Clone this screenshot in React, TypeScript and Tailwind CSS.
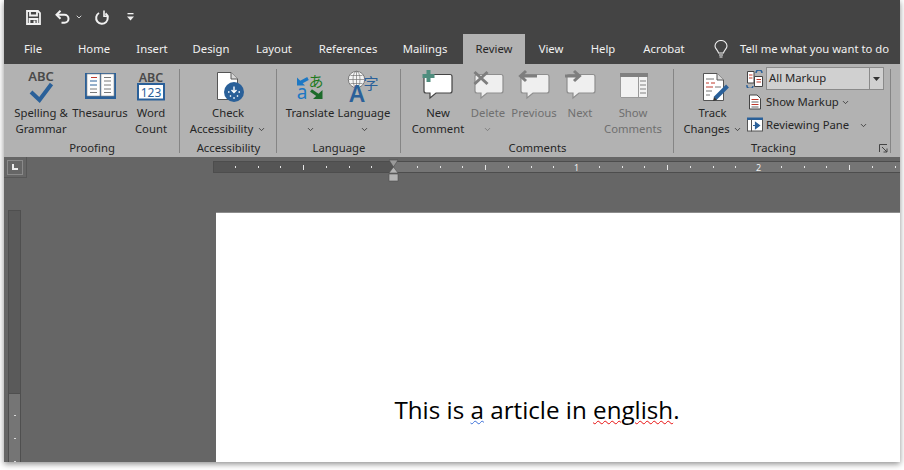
import React from 'react';
import { ChevronDown } from 'lucide-react';

const BLUE = '#2a6099';

const tabs = [
  { name: 'File', cls: 'w-[58px]' },
  { name: 'Home', cls: 'w-[64px]' },
  { name: 'Insert', cls: 'w-[52px]' },
  { name: 'Design', cls: 'w-[66px]' },
  { name: 'Layout', cls: 'w-[60px]' },
  { name: 'References', cls: 'w-[88px]' },
  { name: 'Mailings', cls: 'w-[66px]' },
  { name: 'Review', cls: 'w-[62px] ml-[5px] bg-[#b2b2b2] text-[#262626]' },
  { name: 'View', cls: 'w-[52px]' },
  { name: 'Help', cls: 'w-[52px]' },
  { name: 'Acrobat', cls: 'w-[70px]' },
];

// every icon uses page coordinates in its viewBox, which keeps the numbers easy to check
const Icon: React.FC<{ cx: number; children: React.ReactNode }> = ({ cx, children }) => (
  <svg width="60" height="38" viewBox={`${cx - 30} 68 60 38`} className="shrink-0 overflow-visible">
    {children}
  </svg>
);

const Chev: React.FC<{ className?: string }> = ({ className = '' }) => (
  <ChevronDown size={9} strokeWidth={2} className={`inline-block ${className}`} />
);

const Bubble: React.FC<{ x: number; stroke: string; fill: string }> = ({ x, stroke, fill }) => (
  <path
    d={`M${x + 2} 74.5 H${x + 26} a2 2 0 0 1 2 2 V91 a2 2 0 0 1 -2 2 H${x + 12} L${x + 6} 98 V93 H${x + 2} a2 2 0 0 1 -2 -2 V76.5 a2 2 0 0 1 2 -2 Z`}
    fill={fill}
    stroke={stroke}
    strokeWidth="1.2"
  />
);

const Large: React.FC<{
  w: string;
  icon: React.ReactNode;
  muted?: boolean;
  children: React.ReactNode;
}> = ({ w, icon, muted, children }) => (
  <div className={`${w} shrink-0 flex flex-col items-center ${muted ? 'text-[#6f6f6f]' : 'text-[#262626]'}`}>
    <div className="h-[37px] flex justify-center">{icon}</div>
    <div className="text-center leading-4 whitespace-nowrap">{children}</div>
  </div>
);

const Group: React.FC<{ w: string; label: string; labelCls?: string; bodyCls?: string; children: React.ReactNode }> = ({
  w,
  label,
  labelCls = '',
  bodyCls = '',
  children,
}) => (
  <div className={`${w} shrink-0 relative h-full flex flex-col`}>
    <div className={`flex flex-1 pt-[4px] ${bodyCls}`}>{children}</div>
    <div className={`h-[19px] text-center leading-[19px] text-[#262626] ${labelCls}`}>{label}</div>
    <div className="absolute right-0 top-[5px] bottom-[4px] w-px bg-[#858585]" />
  </div>
);

const rulerCells = Array.from({ length: 31 }, (_, i) => i - 7);

export default function App() {
  return (
    <div className="w-[904px] h-[470px] bg-white overflow-hidden pl-[4px] [font-family:'Noto_Sans',sans-serif] text-[11.3px]">
      <div className="w-[896px] h-[462px] flex flex-col shadow-[0_2px_6px_rgba(0,0,0,0.45)]">
        {/* quick access */}
        <div className="h-[34px] bg-[#444444] flex items-center pl-[22px] text-[#f1f1f1]">
          <svg width="15" height="15" viewBox="0 0 15 15" fill="none" stroke="#f1f1f1" strokeWidth="1.8">
            <path d="M1 1 H12 L14 3 V14 H1 Z" />
            <path d="M4 1 V5.5 H11 V1" />
            <path d="M3.5 14 V9 H11.5 V14" />
            <rect x="7.5" y="10.5" width="2" height="3" fill="#f1f1f1" stroke="none" />
          </svg>
          <svg width="15" height="14" viewBox="0 0 15 14" fill="none" stroke="#f1f1f1" strokeWidth="2" className="ml-[14px]">
            <path d="M5.5 0.8 L1.5 4.8 L5.5 8.8" />
            <path d="M2 4.8 H9.5 a4 4 0 0 1 0 8 H6.5" />
          </svg>
          <ChevronDown size={8} strokeWidth={2.5} className="ml-[5px]" />
          <svg width="15" height="15" viewBox="0 0 15 15" fill="none" stroke="#f1f1f1" strokeWidth="2" className="ml-[11px]">
            <path d="M5 3 A5.8 5.8 0 1 0 11.5 3.4" />
            <path d="M10 0.5 V6.2 H14.5" strokeWidth="1.6" />
          </svg>
          <svg width="7" height="8" viewBox="0 0 7 8" fill="#f1f1f1" className="ml-[18px]">
            <rect x="0.5" y="0" width="6" height="1.3" />
            <path d="M0 3.5 H7 L3.5 7.5 Z" />
          </svg>
        </div>

        {/* tabs */}
        <div className="h-[30px] bg-[#444444] flex text-[#f1f1f1]">
          {tabs.map((t) => (
            <div key={t.name} className={`${t.cls} h-full flex items-center justify-center pt-[1px]`}>
              {t.name}
            </div>
          ))}
          <svg width="16" height="18" viewBox="0 0 16 18" fill="none" stroke="#f1f1f1" strokeWidth="1.1" className="ml-[14px] self-center">
            <path d="M5.5 13 C5 10 2 9 2 6 a6 5.5 0 0 1 12 0 C14 9 11 10 10.5 13 Z" />
            <path d="M6 15 H10 M6.5 17 H9.5" />
          </svg>
          <div className="ml-[11px] flex items-center pt-[1px] whitespace-nowrap">Tell me what you want to do</div>
        </div>

        {/* ribbon */}
        <div className="h-[93px] bg-[#b2b2b2] flex">
          <Group w="w-[176px]" label="Proofing" bodyCls="pl-[6px]">
            <Large
              w="w-[62px]"
              icon={
                <Icon cx={41}>
                  <text x="41" y="81" textAnchor="middle" fontSize="13" fontWeight="600" fill="#4a4a4a">ABC</text>
                  <path d="M31 92 L39.5 100 L51.5 84" fill="none" stroke={BLUE} strokeWidth="4" />
                </Icon>
              }
            >
              Spelling &amp;<br />Grammar
            </Large>
            <Large
              w="w-[56px]"
              icon={
                <Icon cx={100}>
                  <rect x="85" y="73" width="31" height="26" fill={BLUE} />
                  <path d="M87 74 H100 V96 H87 Z M101 74 H114 V96 H101 Z" fill="#fdfdfd" stroke="#8f8f8f" strokeWidth="0.6" />
                  <path d="M91 77.5 H97" stroke="#c0392b" strokeWidth="1" />
                  <path d="M90 81 H97 M90 85 H97" stroke={BLUE} strokeWidth="1" />
                  <path d="M90 89 H97 M90 92.5 H97 M104 77.5 H111 M104 81 H111 M104 85 H111 M104 89 H111 M104 92.5 H111" stroke="#7a7a7a" strokeWidth="1" />
                </Icon>
              }
            >
              Thesaurus
            </Large>
            <Large
              w="w-[46px]"
              icon={
                <Icon cx={151}>
                  <text x="151" y="81.5" textAnchor="middle" fontSize="12.5" fontWeight="600" fill="#4a4a4a">ABC</text>
                  <rect x="138" y="84" width="26" height="15.5" fill="#fff" stroke={BLUE} strokeWidth="2" />
                  <text x="151" y="96.5" textAnchor="middle" fontSize="12" fill={BLUE}>123</text>
                </Icon>
              }
            >
              Word<br />Count
            </Large>
          </Group>

          <Group w="w-[97px]" label="Accessibility">
            <Large
              w="w-[96px]"
              icon={
                <Icon cx={228}>
                  <path d="M217.5 72.5 H231 L237.5 79 V99.5 H217.5 Z" fill="#fff" stroke="#555" strokeWidth="1" />
                  <path d="M231 72.5 V79 H237.5" fill="#d8d8d8" stroke="#555" strokeWidth="1" />
                  <circle cx="234" cy="92" r="10" fill={BLUE} />
                  <path d="M234 86.5 V92.5 M231.5 90 L234 92.5 L236.5 90" fill="none" stroke="#fff" strokeWidth="1.4" />
                  <path d="M228 92 h1.5 M238.5 92 h1.5 M230 96.5 l1 -1 M237 95.5 l1 1 M233.3 98 h1.5" stroke="#fff" strokeWidth="1.5" />
                </Icon>
              }
            >
              Check<br />Accessibility <Chev className="ml-[1px]" />
            </Large>
          </Group>

          <Group w="w-[124px]" label="Language" bodyCls="pl-[5px]">
            <Large
              w="w-[56px]"
              icon={
                <Icon cx={310}>
                  <path d="M297 77.5 L297 85.5 L305 85.5 Z" fill="#1d78c4" />
                  <path d="M300.5 82.5 L308 78.5" stroke="#1d78c4" strokeWidth="3.2" />
                  <text x="302" y="99" textAnchor="middle" fontSize="19" fill="#1d78c4">a</text>
                  <text x="316" y="86.5" textAnchor="middle" fontSize="15" fill="#1e7a1e" fontFamily="'Noto Sans CJK JP',sans-serif">あ</text>
                  <path d="M322.5 90 L322.5 99 L313 99 Z" fill="#1c6b2a" />
                  <path d="M311 90.5 L319 96" stroke="#1c6b2a" strokeWidth="3.2" />
                </Icon>
              }
            >
              Translate
              <div className="h-[16px] flex justify-center items-center"><Chev /></div>
            </Large>
            <Large
              w="w-[52px]"
              icon={
                <Icon cx={364}>
                  <circle cx="356.5" cy="79.5" r="8.2" fill="#f5f5f5" stroke="#666" strokeWidth="0.8" />
                  <path d="M348.5 79.5 H364.5 M356.5 71.5 V87.5 M350.5 75.5 H362.5 M350.5 83.5 H362.5" stroke="#777" strokeWidth="0.7" />
                  <ellipse cx="356.5" cy="79.5" rx="3.5" ry="8.2" fill="none" stroke="#777" strokeWidth="0.7" />
                  <text x="357" y="102" textAnchor="middle" fontSize="23" fontWeight="600" fill={BLUE}>A</text>
                  <text x="371" y="89" textAnchor="middle" fontSize="15" fill={BLUE} fontFamily="'Noto Sans CJK SC',sans-serif">字</text>
                </Icon>
              }
            >
              Language
              <div className="h-[16px] flex justify-center items-center"><Chev /></div>
            </Large>
          </Group>

          <Group w="w-[273px]" label="Comments" bodyCls="pl-[10px]">
            <Large
              w="w-[54px]"
              icon={
                <Icon cx={438}>
                  <Bubble x={424} stroke="#444" fill="#fff" />
                  <path d="M426.5 70 H430.5 V74 H434.5 V78 H430.5 V82 H426.5 V78 H422.5 V74 H426.5 Z" fill="#4f8d7e" />
                </Icon>
              }
            >
              New<br />Comment
            </Large>
            <Large
              w="w-[46px]"
              muted
              icon={
                <Icon cx={488}>
                  <Bubble x={475} stroke="#8e8e8e" fill="#efefef" />
                  <path d="M474.5 72 L487.5 84 M487.5 72 L474.5 84" stroke="#7e7e7e" strokeWidth="3" />
                </Icon>
              }
            >
              Delete
              <div className="h-[16px] flex justify-center items-center"><Chev /></div>
            </Large>
            <Large
              w="w-[46px]"
              muted
              icon={
                <Icon cx={534}>
                  <Bubble x={521} stroke="#8e8e8e" fill="#efefef" />
                  <path d="M526 71 L520.5 76 L526 81 M521 76 H537" fill="none" stroke="#7e7e7e" strokeWidth="3" />
                </Icon>
              }
            >
              Previous
            </Large>
            <Large
              w="w-[46px]"
              muted
              icon={
                <Icon cx={580}>
                  <Bubble x={567} stroke="#8e8e8e" fill="#efefef" />
                  <path d="M574 71 L579.5 76 L574 81 M565 76 H579" fill="none" stroke="#7e7e7e" strokeWidth="3" />
                </Icon>
              }
            >
              Next
            </Large>
            <Large
              w="w-[60px]"
              muted
              icon={
                <Icon cx={633}>
                  <rect x="620" y="73" width="28" height="25" fill="#f2f2f2" />
                  <rect x="620" y="73" width="28" height="4" fill="#808080" />
                  <path d="M620.5 77 V97.5 H647.5 V77 M638.5 77 V97.5" fill="none" stroke="#9a9a9a" strokeWidth="1" />
                  <path d="M640 81 H646 M640 85 H646 M640 89 H646 M640 93 H646" stroke="#808080" strokeWidth="1" />
                </Icon>
              }
            >
              Show<br />Comments
            </Large>
          </Group>

          <Group w="w-[217px]" label="Tracking" labelCls="pr-[18px]" bodyCls="pl-[6px] pt-[3px]">
            <Large
              w="w-[65px]"
              icon={
                <Icon cx={712}>
                  <path d="M702.5 73.5 H716 L722.5 80 V100.5 H702.5 Z" fill="#fff" stroke="#555" strokeWidth="1" />
                  <path d="M716 73.5 V80 H722.5" fill="#ddd" stroke="#555" strokeWidth="1" />
                  <path d="M705 83 H708 M710 83 H714 M705 87 H712" stroke="#c0392b" strokeWidth="1" />
                  <path d="M705 79 H713 M714 87 H720 M705 91 H711 M705 95 H709" stroke="#777" strokeWidth="1" />
                  <path d="M726.5 86 L714 98.5" stroke={BLUE} strokeWidth="4" />
                  <path d="M712 101 L713 97 L716 100 Z" fill="#333" />
                </Icon>
              }
            >
              Track<br />Changes <Chev />
            </Large>
            <div className="flex flex-col text-[#262626] -mt-[1px] ml-[1px]">
              <div className="h-[23px] flex items-center">
                <svg width="18" height="18" viewBox="746 69 18 18" className="shrink-0">
                  <path d="M747.5 70.5 H754 V82 H747.5 Z" fill="#fff" stroke="#444" strokeWidth="1" />
                  <path d="M754.5 75.5 H762.5 V85.5 H754.5 Z" fill="#fff" stroke="#444" strokeWidth="1" />
                  <path d="M749 74 H752.5 M749 77 H752.5 M756.5 78.5 H761 M756.5 81 H761" stroke="#c0392b" strokeWidth="1" />
                  <path d="M756 72 A3 3 0 0 1 762 72 M747 84 A3 3 0 0 0 753 85" fill="none" stroke={BLUE} strokeWidth="1.4" />
                </svg>
                <div className="w-[118px] h-[23px] ml-[2px] bg-[#d0d0d0] border border-[#8a8a8a] flex items-center">
                  <div className="flex-1 pl-[2px]">All Markup</div>
                  <div className="w-[14px] h-full border-l border-[#8a8a8a] flex items-center justify-center">
                    <svg width="7" height="4" viewBox="0 0 7 4" fill="#333"><path d="M0 0 H7 L3.5 4 Z" /></svg>
                  </div>
                </div>
              </div>
              <div className="h-[24px] flex items-center">
                <svg width="18" height="16" viewBox="746 92.5 18 16" className="shrink-0">
                  <path d="M749.5 93.5 H757 L760.5 97 V107.5 H749.5 Z" fill="#fff" stroke="#444" strokeWidth="1" />
                  <path d="M751.5 98 H758.5 M751.5 103 H758.5" stroke="#c0392b" strokeWidth="1" />
                  <path d="M751.5 100.5 H758.5 M751.5 105.5 H758.5" stroke="#666" strokeWidth="1" />
                </svg>
                <div className="ml-[2px] whitespace-nowrap">Show Markup</div>
                <Chev className="ml-[2px]" />
              </div>
              <div className="h-[22px] flex items-center">
                <svg width="18" height="16" viewBox="746 116.5 18 16" className="shrink-0">
                  <rect x="747.5" y="118.5" width="15" height="12" fill="#fff" stroke="#555" strokeWidth="1" />
                  <rect x="747" y="117" width="16" height="2.5" fill={BLUE} />
                  <path d="M751.5 119 V131" stroke="#555" strokeWidth="1" />
                  <path d="M753 125 H757 M755.5 122 L759.5 125 L755.5 128 Z" fill={BLUE} stroke={BLUE} strokeWidth="1.2" />
                </svg>
                <div className="ml-[2px] whitespace-nowrap">Reviewing Pane</div>
                <Chev className="ml-[10px]" />
              </div>
            </div>
            <svg width="9" height="9" viewBox="0 0 9 9" fill="none" stroke="#444" strokeWidth="1" className="absolute right-[3px] bottom-[4px]">
              <path d="M0.5 8 V0.5 H8" />
              <path d="M3 3 L8 8 M8 4.5 V8 H4.5" />
            </svg>
          </Group>
        </div>

        {/* document area */}
        <div className="flex-1 min-h-0 bg-[#666666] flex">
          <div className="w-[209px] shrink-0 flex flex-col">
            <div className="w-[23px] h-[22px] border-r border-b border-[#575757] flex items-center justify-center">
              <div className="w-[16px] h-[15px] border border-[#8a8a8a] flex items-center justify-center">
                <div className="w-[6px] h-[6px] border-l-2 border-b-2 border-[#ececec]" />
              </div>
            </div>
            <div className="ml-[4px] mt-[32px] w-[13px] flex-1 border-x border-t border-[#4f4f4f] flex flex-col">
              <div className="h-[182px] bg-[#5a5a5a]" />
              <div className="flex-1 bg-[#757575] border-t border-[#4f4f4f] flex flex-col items-center">
                <div className="w-[2px] h-px bg-[#d8d8d8] mt-[21px]" />
                <div className="w-[2px] h-px bg-[#d8d8d8] mt-[22px]" />
                <div className="w-[2px] h-px bg-[#d8d8d8] mt-[22px]" />
              </div>
            </div>
          </div>

          <div className="flex-1 min-w-0 flex flex-col">
            {/* ruler */}
            <div className="mt-[4px] h-[12px] relative flex overflow-hidden border-y border-l border-[#4d4d4d] bg-[#757575]">
              <div className="absolute left-0 top-0 bottom-0 w-[180px] bg-[#555555]" />
              <div className="relative flex pl-[10px] text-[9px] leading-none text-[#efefef]">
                {rulerCells.map((k) => {
                  const mod = ((k % 8) + 8) % 8;
                  return (
                    <div key={k} className="w-[22.75px] shrink-0 flex items-center justify-center">
                      {mod === 0 ? (
                        k > 0 ? k / 8 : null
                      ) : mod === 4 ? (
                        <div className="w-px h-[5px] bg-[#e6e6e6]" />
                      ) : (
                        <div className="w-px h-[2px] bg-[#e6e6e6]" />
                      )}
                    </div>
                  );
                })}
              </div>
            </div>
            {/* page */}
            <div className="ml-[3px] mt-[39px] flex-1 bg-white border-t border-[#8c8c8c] relative">
              <div className="pt-[183px] pr-[42px] text-center text-[24.2px] leading-[28px] text-black [font-family:'Open_Sans',sans-serif] whitespace-nowrap">
                This is <span className="underline decoration-wavy decoration-[#3a6fd8] decoration-1">a</span> article in{' '}
                <span className="underline decoration-wavy decoration-[#e81010] decoration-1">english</span>.
              </div>
            </div>
          </div>
        </div>
      </div>

      {/* margin marker on the ruler */}
      <svg width="11" height="23" viewBox="0 0 11 23" className="absolute left-[388px] top-[158.5px]">
        <path d="M1 1 H10 L5.5 8 Z" fill="#9a9a9a" stroke="#4f4f4f" strokeWidth="0.6" />
        <path d="M5.5 8 L10 14 H1 Z" fill="#b5b5b5" stroke="#4f4f4f" strokeWidth="0.6" />
        <rect x="1" y="15" width="9" height="7" fill="#b5b5b5" stroke="#4f4f4f" strokeWidth="0.6" />
      </svg>
    </div>
  );
}
